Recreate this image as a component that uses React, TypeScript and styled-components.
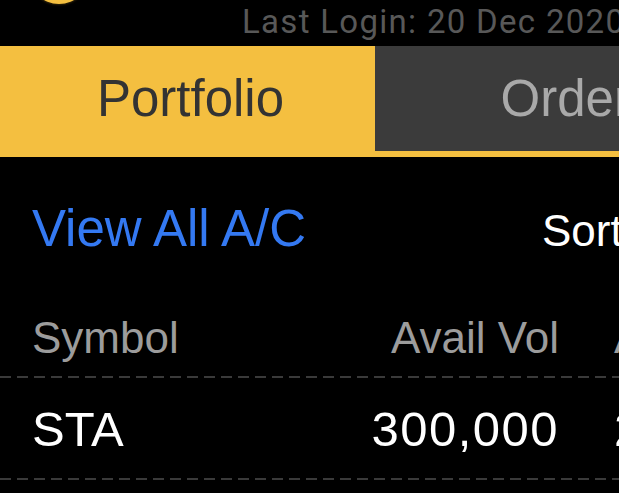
import * as React from "react";
import styled, { createGlobalStyle } from "styled-components";

const GlobalStyle = createGlobalStyle`
    html, body {
        margin: 0;
        padding: 0;
        background: #000;
    }
`;

const Screen = styled.div`
    width: 619px;
    height: 493px;
    overflow: hidden;
    background: #000;
    font-family: "Liberation Sans", Arial, sans-serif;
`;

const TopBar = styled.div`
    display: flex;
    align-items: flex-start;
    height: 46px;
    overflow: hidden;
`;

const Logo = styled.div`
    flex: none;
    width: 60px;
    height: 60px;
    margin: -56px 0 0 29px;
    border-radius: 50%;
    background: #f4bf40;
    box-shadow: 0 0 2px 1px rgba(60, 45, 10, 0.8);
`;

const LastLogin = styled.div`
    flex: none;
    margin: 5px 0 0 153px;
    font-family: Roboto, "Liberation Sans", sans-serif;
    font-size: 33px;
    line-height: 33px;
    letter-spacing: 1.3px;
    color: #585858;
    white-space: nowrap;
`;

const TabBar = styled.div`
    display: flex;
    height: 105px;
    border-bottom: 6px solid #f4bf40;
    overflow: hidden;
`;

const Tab = styled.div<{ active?: boolean; shift?: number }>`
    flex: none;
    width: 375px;
    display: flex;
    align-items: center;
    justify-content: center;
    padding-left: ${props => props.shift || 0}px;
    box-sizing: border-box;
    font-size: 51px;
    background: ${props => props.active ? "#f4bf40" : "#3b3b3b"};
    color: ${props => props.active ? "#333" : "#a9a9a9"};
    white-space: nowrap;
`;

const ActionRow = styled.div`
    display: grid;
    grid-template-columns: 510px auto;
    align-items: baseline;
    margin-top: 47px;
    padding-left: 32px;
    white-space: nowrap;
`;

const ViewAll = styled.span`
    font-size: 51px;
    line-height: 50px;
    color: #3479f2;
`;

const Sort = styled.span`
    font-size: 44px;
    line-height: 50px;
    color: #fff;
`;

const TableRow = styled.div<{ head?: boolean }>`
    display: grid;
    grid-template-columns: 200px 327px 55px auto;
    padding-left: 32px;
    margin-top: ${props => props.head ? 60 : 27}px;
    font-size: ${props => props.head ? 44 : 49}px;
    line-height: ${props => props.head ? 44 : 49}px;
    color: ${props => props.head ? "#9c9c9c" : "#fff"};
    white-space: nowrap;
`;

const Cell = styled.span<{ right?: boolean; spaced?: boolean }>`
    text-align: ${props => props.right ? "right" : "left"};
    letter-spacing: ${props => props.spaced ? "1.5px" : "0"};
`;

const Divider = styled.div<{ gap: number }>`
    height: 2px;
    margin-top: ${props => props.gap}px;
    background: repeating-linear-gradient(to right, #3a3a3a 0 11px, transparent 11px 17px);
`;

export default function App() {
    return (
        <Screen>
            <GlobalStyle />
            <TopBar>
                <Logo />
                <LastLogin>Last Login: 20 Dec 2020</LastLogin>
            </TopBar>

            <TabBar>
                <Tab active shift={6}>Portfolio</Tab>
                <Tab shift={32}>Orders</Tab>
            </TabBar>

            <ActionRow>
                <ViewAll>View All A/C</ViewAll>
                <Sort>Sort By</Sort>
            </ActionRow>

            <TableRow head>
                <Cell>Symbol</Cell>
                <Cell right>Avail Vol</Cell>
                <span />
                <Cell>Avg Cost</Cell>
            </TableRow>
            <Divider gap={16} />

            <TableRow>
                <Cell>STA</Cell>
                <Cell right spaced>300,000</Cell>
                <span />
                <Cell>2.50</Cell>
            </TableRow>
            <Divider gap={24} />
        </Screen>
    );
}
